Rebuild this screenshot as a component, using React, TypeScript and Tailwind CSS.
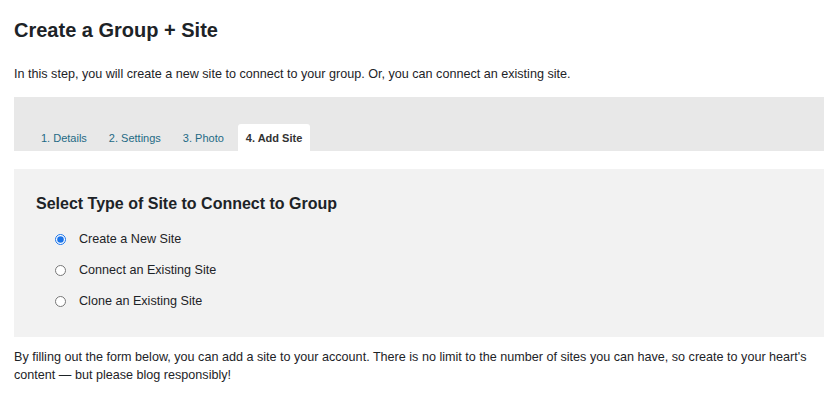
export default function App() {
  const tabs = ["1. Details", "2. Settings", "3. Photo", "4. Add Site"];
  const options = ["Create a New Site", "Connect an Existing Site", "Clone an Existing Site"];
  return (
    <div className="bg-white px-[14px] pt-[17px] text-[12.6px] text-[#1d2327]" style={{ fontFamily: "'Liberation Sans', Arial, sans-serif" }}>
      <h1 className="text-[20px] font-bold leading-[26px]">Create a Group + Site</h1>
      <p className="mt-[22px] leading-[18px]">
        In this step, you will create a new site to connect to your group. Or, you can connect an existing site.
      </p>
      <div className="mt-[14px] flex h-[54px] items-end gap-[6px] bg-[#e8e8e8] pl-[19px]">
        {tabs.map((t, i) => (
          <div
            key={t}
            className={
              i === 3
                ? "rounded-t-[3px] bg-white px-[8px] pt-[7px] pb-[6px] text-[11px] font-bold leading-[14px] text-[#333]"
                : "px-[8px] pt-[7px] pb-[6px] text-[11px] leading-[14px] text-[#1e6a85]"
            }
          >
            {t}
          </div>
        ))}
      </div>
      <div className="mt-[18px] h-[168px] bg-[#f2f2f2] px-[22px] pt-[24px]">
        <h2 className="text-[16px] font-bold leading-[22px]">Select Type of Site to Connect to Group</h2>
        <div className="mt-[9px] flex flex-col">
          {options.map((o, i) => (
            <label key={o} className="flex h-[31px] items-center pl-[19px]">
              <input type="radio" name="site" defaultChecked={i === 0} className="m-0 h-[11px] w-[11px] accent-[#1a73e8]" />
              <span className="ml-[13px]">{o}</span>
            </label>
          ))}
        </div>
      </div>
      <p className="mt-[11px] leading-[18px]">
        By filling out the form below, you can add a site to your account. There is no limit to the number of sites you can have, so create to your heart's content — but please blog responsibly!
      </p>
    </div>
  );
}
